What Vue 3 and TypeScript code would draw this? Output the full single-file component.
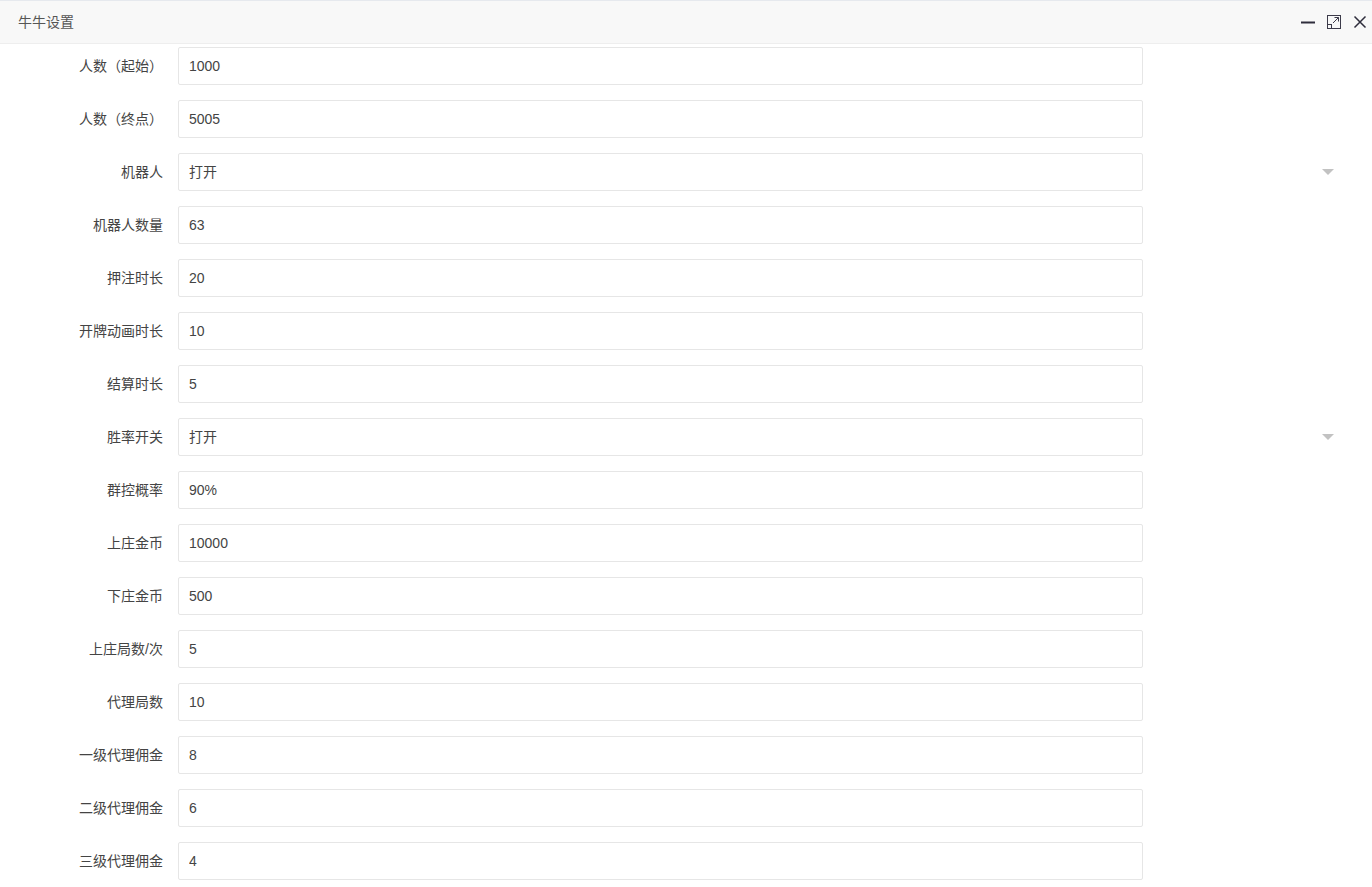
<script setup lang="ts">
interface Field {
  label: string;
  value: string;
  select?: boolean;
}

const fields: Field[] = [
  { label: '人数（起始）', value: '1000' },
  { label: '人数（终点）', value: '5005' },
  { label: '机器人', value: '打开', select: true },
  { label: '机器人数量', value: '63' },
  { label: '押注时长', value: '20' },
  { label: '开牌动画时长', value: '10' },
  { label: '结算时长', value: '5' },
  { label: '胜率开关', value: '打开', select: true },
  { label: '群控概率', value: '90%' },
  { label: '上庄金币', value: '10000' },
  { label: '下庄金币', value: '500' },
  { label: '上庄局数/次', value: '5' },
  { label: '代理局数', value: '10' },
  { label: '一级代理佣金', value: '8' },
  { label: '二级代理佣金', value: '6' },
  { label: '三级代理佣金', value: '4' },
];
</script>

<template>
  <div class="layer">
    <div class="title">
      <span class="title-text">牛牛设置</span>
      <div class="tools">
        <svg width="14" height="14" viewBox="0 0 14 14"><path d="M0 7.5h14" stroke="#2e2d3c" stroke-width="2" fill="none" /></svg>
        <svg width="14" height="14" viewBox="0 0 14 14" fill="none" stroke="#3c3b4a" stroke-width="1">
          <rect x=".5" y=".5" width="13" height="13" />
          <rect x=".5" y="9.5" width="4" height="4" />
          <path d="M6 8l5.500-5.500M7.500 2.500h4v4" />
        </svg>
        <svg width="14" height="14" viewBox="0 0 14 14"><path d="M1.500 1.500l11 11M12.500 1.500l-11 11" stroke="#2e2d3c" stroke-width="1.500" fill="none" /></svg>
      </div>
    </div>
    <form class="content">
      <div v-for="f in fields" :key="f.label" class="row">
        <label class="label">{{ f.label }}</label>
        <input class="input" :class="{ 'input-select': f.select }" type="text" :value="f.value" :readonly="f.select" />
        <i v-if="f.select" class="arrow"></i>
      </div>
    </form>
  </div>
</template>

<style scoped>
.layer {
  height: 887px;
  overflow: hidden;
  background: #fff;
  color: #444;
  font-family: "Liberation Sans", "Noto Sans CJK SC", sans-serif;
  font-size: 14px;
}

.title {
  display: flex;
  align-items: center;
  justify-content: space-between;
  box-sizing: border-box;
  height: 44px;
  padding: 0 5px 0 18px;
  background: #f8f8f8;
  border-top: 1px solid #e6e9ee;
  border-bottom: 1px solid #eee;
}

.title-text {
  padding-bottom: 2px;
  color: #555;
}

.tools {
  display: flex;
  align-items: center;
  gap: 12px;
}

.content {
  display: flex;
  flex-direction: column;
  gap: 15px;
  padding-top: 3px;
}

.row {
  position: relative;
  display: flex;
  align-items: center;
  height: 38px;
}

.label {
  box-sizing: border-box;
  width: 178px;
  padding-right: 15px;
  padding-bottom: 2px;
  text-align: right;
}

.input {
  box-sizing: border-box;
  width: 965px;
  height: 38px;
  padding: 0 10px;
  border: 1px solid #e6e6e6;
  border-radius: 2px;
  outline: none;
  background: #fff;
  color: #444;
  font: inherit;
}

.input-select {
  padding-bottom: 2px;
}

.arrow {
  position: absolute;
  top: 16px;
  right: 38px;
  width: 0;
  height: 0;
  border-style: solid;
  border-width: 6px 6px 0;
  border-color: #c2c2c2 transparent transparent;
}
</style>
